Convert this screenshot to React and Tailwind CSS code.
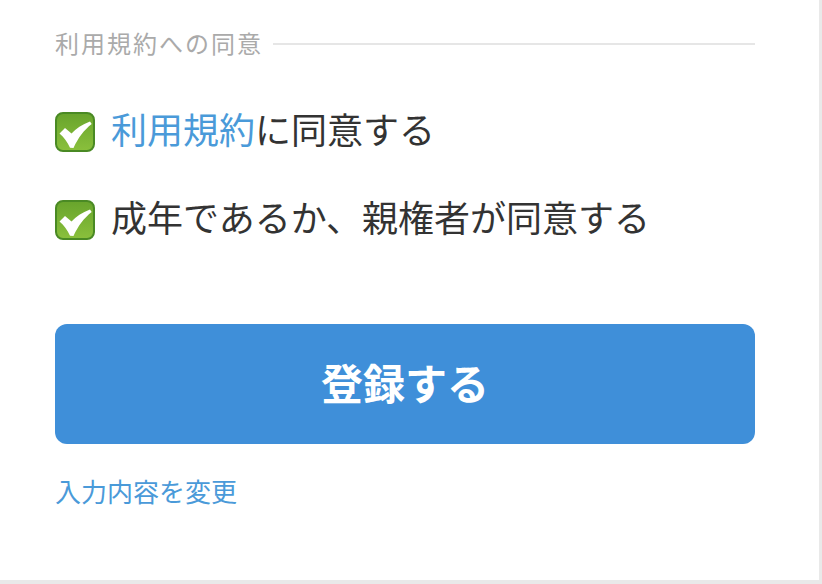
const font = { fontFamily: '"Noto Sans CJK JP", sans-serif' };

const CheckBox = () => (
  <svg width="40" height="40" viewBox="0 0 40 40" className="shrink-0">
    <defs>
      <linearGradient id="boxFill" x1="0" y1="0" x2="0" y2="1">
        <stop offset="0" stopColor="#68a42c" />
        <stop offset="1" stopColor="#8ac03c" />
      </linearGradient>
    </defs>
    <rect x="1" y="1" width="38" height="38" rx="7" fill="url(#boxFill)" stroke="#4a8a24" strokeWidth="2" />
    <path d="M4.5 21.5 L10 16 L16.5 21.5 C21 16.5 27 12.5 35 9.5 L36.7 12 C29 18 23 26 18.5 36 L15 35.8 C12.5 30 9 25.5 4.5 21.5 Z" fill="#ffffff" />
  </svg>
);

export default function App() {
  return (
    <div className="w-[822px] h-[584px] bg-[#e9e9e9] overflow-hidden" style={font}>
      <div className="w-[819px] h-[580px] bg-white pl-[55px] pr-[64px] pt-[24px]">
        <div className="flex items-center gap-[10px] h-[38px]">
          <span className="text-[24px] leading-[38px] tracking-[2px] text-[#aaaaaa] whitespace-nowrap">利用規約への同意</span>
          <div className="flex-1 h-[2px] mt-[1px] bg-[#e6e6e6]" />
        </div>

        <div className="flex flex-col gap-[48px] mt-[50px]">
          <label className="flex items-center gap-[16px] h-[40px] text-[36px] text-[#333333] whitespace-nowrap">
            <CheckBox />
            <span className="-mt-[9px]"><span className="text-[#4a9ad9]">利用規約</span>に同意する</span>
          </label>
          <label className="flex items-center gap-[16px] h-[40px] text-[36px] text-[#333333] whitespace-nowrap">
            <CheckBox />
            <span className="-mt-[9px]">成年であるか、親権者が同意する</span>
          </label>
        </div>

        <button className="block w-full h-[120px] mt-[84px] rounded-[12px] bg-[#3f8fd9] text-white text-[42px] font-bold">
          <span className="block -mt-[6px]">登録する</span>
        </button>

        <a className="block mt-[27px] text-[26px] leading-[40px] text-[#4a9ad9]">入力内容を変更</a>
      </div>
    </div>
  );
}
